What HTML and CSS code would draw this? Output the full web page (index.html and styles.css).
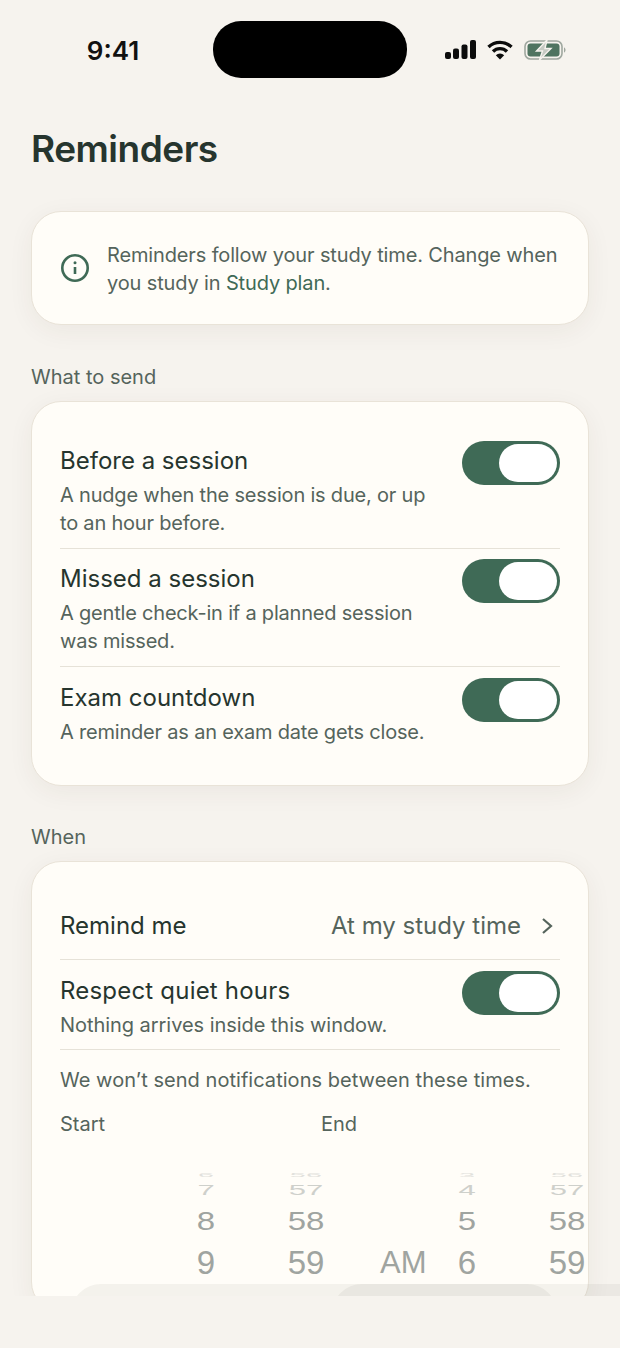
FILE: index.html
```html
<!DOCTYPE html>
<html lang="en">
<head>
  <meta charset="UTF-8" />
  <meta name="viewport" content="width=device-width, initial-scale=1" />
  <title>Reminders</title>
  <link rel="stylesheet" href="styles.css">
</head>
<body>
  <div class="screen">
    <div class="status-bar">
      <div class="status-time">9:41</div>
      <div class="island"></div>
      <div class="status-icons">
        <svg class="icon-signal" width="31" height="19" viewBox="0 0 31 19">
          <rect x="0" y="12" width="6" height="7" rx="2" />
          <rect x="8" y="8.5" width="6" height="10.5" rx="2" />
          <rect x="16.5" y="4.5" width="6" height="14.5" rx="2" />
          <rect x="25" y="0" width="6" height="19" rx="2" />
        </svg>
        <svg class="icon-wifi" width="26" height="20" viewBox="0 0 26 20">
          <path d="M1.5 7 A16.5 16.5 0 0 1 24.5 7" />
          <path d="M6 11.5 A10 10 0 0 1 20 11.5" />
          <path d="M13 19.5 L8.8 15.2 A6 6 0 0 1 17.2 15.2 Z" class="wifi-dot" />
        </svg>
        <svg class="icon-battery" width="43" height="20" viewBox="0 0 43 20">
          <rect x="1" y="1" width="37" height="18" rx="5.5" fill="none" stroke="#9fa79f" stroke-width="1.6" />
          <rect x="3.5" y="3.5" width="32" height="13" rx="3" fill="#4f7460" />
          <path d="M40 7.5 C42 8 42 12 40 12.5 Z" fill="#9fa79f" />
          <path d="M23 0 L12.5 11 H18.5 L15.5 20 L27 8.5 H21 Z" fill="#c6cac3" stroke="#f6f3ee" stroke-width="1.4" />
        </svg>
      </div>
    </div>

    <main class="content">
      <h1 class="page-title">Reminders</h1>

      <section class="card info-card">
        <svg class="info-icon" width="30" height="30" viewBox="0 0 30 30">
          <circle cx="15" cy="15" r="12.7" />
          <path d="M15 14 V21" />
          <circle class="info-dot" cx="15" cy="9.8" r="1.5" />
        </svg>
        <p class="info-text">Reminders follow your study time. Change when you study in <a class="link">Study plan</a>.</p>
      </section>

      <h2 class="section-label">What to send</h2>
      <section class="card send-card">
        <div class="row">
          <div class="row-text">
            <div class="row-title">Before a session</div>
            <div class="row-sub">A nudge when the session is due, or up to an hour before.</div>
          </div>
          <div class="toggle"><div class="knob"></div></div>
        </div>
        <div class="row">
          <div class="row-text">
            <div class="row-title">Missed a session</div>
            <div class="row-sub">A gentle check-in if a planned session was missed.</div>
          </div>
          <div class="toggle"><div class="knob"></div></div>
        </div>
        <div class="row last">
          <div class="row-text">
            <div class="row-title">Exam countdown</div>
            <div class="row-sub">A reminder as an exam date gets close.</div>
          </div>
          <div class="toggle"><div class="knob"></div></div>
        </div>
      </section>

      <h2 class="section-label when-label">When</h2>
      <section class="card when-card">
        <div class="row row-link">
          <div class="row-title">Remind me</div>
          <div class="row-value">
            <span>At my study time</span>
            <svg width="12" height="18" viewBox="0 0 12 18"><path d="M2 2 L10 9 L2 16" /></svg>
          </div>
        </div>
        <div class="row row-quiet">
          <div class="row-text">
            <div class="row-title">Respect quiet hours</div>
            <div class="row-sub">Nothing arrives inside this window.</div>
          </div>
          <div class="toggle"><div class="knob"></div></div>
        </div>
        <p class="quiet-note">We won’t send notifications between these times.</p>
        <div class="pickers">
          <div class="picker-col">
            <div class="picker-label">Start</div>
            <div class="picker">
              <div class="wheel">
                <div class="tick t3">6</div><div class="tick t2">7</div><div class="tick t1">8</div><div class="tick t0">9</div>
              </div>
              <div class="wheel">
                <div class="tick t3">56</div><div class="tick t2">57</div><div class="tick t1">58</div><div class="tick t0">59</div>
              </div>
              <div class="wheel wheel-ampm">
                <div class="tick t3"></div><div class="tick t2"></div><div class="tick t1"></div><div class="tick t0">AM</div>
              </div>
              <div class="picker-band"></div>
            </div>
          </div>
          <div class="picker-col">
            <div class="picker-label">End</div>
            <div class="picker">
              <div class="wheel">
                <div class="tick t3">3</div><div class="tick t2">4</div><div class="tick t1">5</div><div class="tick t0">6</div>
              </div>
              <div class="wheel">
                <div class="tick t3">56</div><div class="tick t2">57</div><div class="tick t1">58</div><div class="tick t0">59</div>
              </div>
              <div class="picker-band"></div>
            </div>
          </div>
        </div>
      </section>
    </main>
  </div>
</body>
</html>
```

FILE: styles.css
```css
html, body {
  height: 100%;
  margin: 0;
  padding: 0;
  background-color: #f6f3ee;
  font-family: Inter, "Noto Sans", sans-serif;
  overflow: hidden;
}

.screen {
  height: 1296px;
  overflow: hidden;
}

/* status bar */
.status-bar {
  display: grid;
  grid-template-columns: 1fr 194px 1fr;
  height: 100px;
  padding-top: 21px;
  box-sizing: border-box;
}

.status-time {
  font-size: 26px;
  font-weight: 600;
  color: #111;
  text-align: center;
  line-height: 59px;
  padding-left: 13px;
}

.island {
  height: 57px;
  background: #000;
  border-radius: 28px;
}

.status-icons {
  display: flex;
  align-items: center;
  gap: 11px;
  height: 57px;
  padding-left: 38px;
}

.icon-signal rect { fill: #0c0c0c; }
.icon-wifi path { fill: none; stroke: #0c0c0c; stroke-width: 3.4; }
.icon-wifi .wifi-dot { fill: #0c0c0c; stroke: none; }

/* page */
.content {
  padding: 0 31px;
}

.page-title {
  margin: 26px 0 0;
  font-size: 37px;
  line-height: 46px;
  font-weight: 600;
  letter-spacing: -0.5px;
  color: #26352e;
}

.card {
  background: #fffdf8;
  border: 1px solid #e9e3d8;
  border-radius: 30px;
  padding: 28px;
  box-shadow: 0 6px 26px rgba(60, 55, 40, 0.06);
}

.info-card {
  display: flex;
  align-items: center;
  gap: 17px;
  margin-top: 39px;
  height: 114px;
  box-sizing: border-box;
}

.info-icon { flex-shrink: 0; }
.info-icon circle { fill: none; stroke: #3f6a56; stroke-width: 2.6; }
.info-icon path { fill: none; stroke: #3f6a56; stroke-width: 2.6; }
.info-icon .info-dot { fill: #3f6a56; stroke: none; }

.info-text {
  margin: 1px -4px 0 0;
  font-size: 20px;
  line-height: 28px;
  letter-spacing: -0.14px;
  color: #55645c;
}

.link { color: #3f6a56; }

.section-label {
  margin: 38px 0 10px;
  font-size: 20px;
  line-height: 28px;
  font-weight: 400;
  color: #55645c;
}

.when-label { margin-top: 37px; }

.send-card { padding-top: 29px; }

/* rows */
.row {
  display: flex;
  justify-content: space-between;
  align-items: flex-start;
  padding: 10px 0 11px;
  border-bottom: 1px solid #e6e2d8;
}

.row.last {
  padding-top: 11px;
  border-bottom: none;
}

.row-text { width: 375px; }

.row-title {
  font-size: 24px;
  line-height: 40px;
  color: #26352e;
}

.row-sub {
  font-size: 20px;
  line-height: 28px;
  letter-spacing: -0.2px;
  color: #55645c;
}

.toggle {
  display: flex;
  justify-content: flex-end;
  width: 98px;
  height: 44px;
  padding: 3px;
  box-sizing: border-box;
  background: #3f6a56;
  border-radius: 22px;
  flex-shrink: 0;
}

.knob {
  width: 58px;
  height: 38px;
  background: #fff;
  border-radius: 19px;
}

.row-link {
  align-items: center;
  padding: 16px 0 13px;
}

.row-value {
  display: flex;
  align-items: center;
  gap: 20px;
  font-size: 24px;
  line-height: 40px;
  color: #55645c;
  padding-right: 7px;
}

.row-value svg path {
  fill: none;
  stroke: #55645c;
  stroke-width: 2.2;
}

.row-quiet { padding: 11px 0 10px; }
.row-quiet .row-title { letter-spacing: 0.2px; }
.row-quiet .row-sub { letter-spacing: -0.05px; }

.quiet-note {
  margin: 16px 0;
  font-size: 20px;
  line-height: 28px;
  letter-spacing: 0.04px;
  color: #55645c;
}

/* time pickers */
.pickers {
  display: grid;
  grid-template-columns: 261px 261px;
}

.picker-label {
  font-size: 20px;
  line-height: 28px;
  color: #55645c;
}

.picker {
  position: relative;
  display: grid;
  grid-template-columns: 100px 100px 96px;
  width: 486px;
  margin-left: 11px;
  padding: 31px 0 0 85px;
  box-sizing: border-box;
  color: #9fa4a0;
  font-family: "Liberation Sans", Arial, sans-serif;
}

.tick {
  display: flex;
  align-items: center;
  justify-content: center;
}

.wheel-ampm .tick {
  justify-content: flex-start;
  padding-left: 24px;
}

.t3 { height: 12px; font-size: 29px; transform: scaleY(0.2); opacity: 0.3; }
.t2 { height: 18px; font-size: 31px; transform: scaleY(0.5); opacity: 0.5; }
.t1 { height: 44px; font-size: 33px; transform: scaleY(0.8); }
.t0 { height: 40px; font-size: 33px; }
.wheel-ampm .t0 { font-size: 31px; }

.picker-band {
  position: absolute;
  left: 0;
  right: 0;
  top: 146px;
  height: 60px;
  background: rgba(60, 60, 50, 0.06);
  border-radius: 30px;
}
```
